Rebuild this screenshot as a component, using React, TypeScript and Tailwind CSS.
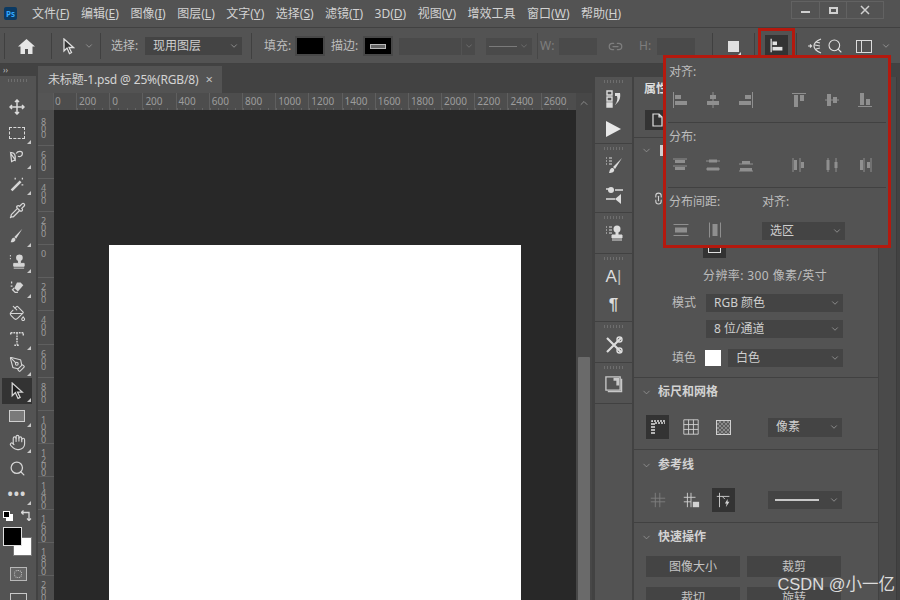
import type { ReactNode } from "react";
import { ChevronDown, ChevronUp, Hand, Link2, PaintBucket, PenTool, Pipette, Search } from "lucide-react";

const MENU = [
  ["文件", "F"],
  ["编辑", "E"],
  ["图像", "I"],
  ["图层", "L"],
  ["文字", "Y"],
  ["选择", "S"],
  ["滤镜", "T"],
  ["3D", "D"],
  ["视图", "V"],
  ["增效工具", ""],
  ["窗口", "W"],
  ["帮助", "H"],
];

const H_RULER = ["200", "0", "200", "400", "600", "800", "1000", "1200", "1400", "1600", "1800", "2000", "2200", "2400", "2600"];
const V_RULER = ["600", "400", "200", "0", "200", "400", "600", "800", "1000", "1200", "1400", "1600", "1800", "2000"];

function Ic({ children, size = 20, className = "" }: { children: ReactNode; size?: number; className?: string }) {
  return (
    <svg width={size} height={size} viewBox="0 0 20 20" fill="none" stroke="currentColor" strokeWidth="1.4" className={className}>
      {children}
    </svg>
  );
}

function Chevron({ className = "" }: { className?: string }) {
  return <ChevronDown size={10} strokeWidth={1.5} className={`shrink-0 text-[#b4b4b4] ${className}`} />;
}

function Select({ label, className }: { label: ReactNode; className: string }) {
  return (
    <div className={`flex items-center justify-between bg-[#444444] pl-2 pr-[3px] text-xs text-[#cfcfcf] ${className}`}>
      <span className="truncate">{label}</span>
      <Chevron />
    </div>
  );
}

function Sep({ className = "" }: { className?: string }) {
  return <div className={`h-[26px] w-px shrink-0 bg-[#404040] ${className}`} />;
}

function Grip({ className = "mb-2" }: { className?: string }) {
  return <div className={`mx-auto mt-[3px] h-[3px] w-[20px] shrink-0 bg-[repeating-linear-gradient(90deg,#6e6e6e_0_1px,transparent_1px_3px)] ${className}`} />;
}

// petit triangle en bas à droite des outils groupés
function Tool({ children, corner = true, active = false }: { children: ReactNode; corner?: boolean; active?: boolean }) {
  return (
    <div className={`relative mx-[2px] flex h-[25.8px] w-[30px] shrink-0 items-center justify-center text-[#d6d6d6] ${active ? "bg-[#333333]" : ""}`}>
      {children}
      {corner && <span className="absolute bottom-[2px] right-[1px] h-0 w-0 border-b-[4px] border-l-[4px] border-b-[#c8c8c8] border-l-transparent" />}
    </div>
  );
}

function SectionTitle({ title }: { title: string }) {
  return (
    <div className="flex h-[28px] items-center pl-[7px] text-xs font-bold text-[#d2d2d2]">
      <ChevronDown size={11} strokeWidth={1.4} className="mr-[6px] text-[#a8a8a8]" />
      {title}
    </div>
  );
}

function RulerLabel({ label }: { label: string }) {
  return <div className="mx-auto w-[10px] leading-[10px] tracking-[-6.500px] [text-orientation:upright] [writing-mode:vertical-rl]">{label}</div>;
}

function AlignIcon({ name }: { name: string }) {
  const bars: Record<string, ReactNode> = {
    left: (
      <>
        <path d="M3.500 2v16" strokeWidth="1" />
        <rect x="5" y="5" width="6" height="4" fill="currentColor" stroke="none" />
        <rect x="5" y="11" width="12" height="4" fill="currentColor" stroke="none" />
      </>
    ),
    hcenter: (
      <>
        <path d="M10 2v16" strokeWidth="1" />
        <rect x="7" y="5" width="6" height="4" fill="currentColor" stroke="none" />
        <rect x="4" y="11" width="12" height="4" fill="currentColor" stroke="none" />
      </>
    ),
    right: (
      <>
        <path d="M16.500 2v16" strokeWidth="1" />
        <rect x="9" y="5" width="6" height="4" fill="currentColor" stroke="none" />
        <rect x="3" y="11" width="12" height="4" fill="currentColor" stroke="none" />
      </>
    ),
    top: (
      <>
        <path d="M3 3.500h14" strokeWidth="1" />
        <rect x="5" y="5" width="4" height="12" fill="currentColor" stroke="none" />
        <rect x="11" y="5" width="4" height="6" fill="currentColor" stroke="none" />
      </>
    ),
    vcenter: (
      <>
        <path d="M3 10h14" strokeWidth="1" />
        <rect x="5" y="4" width="4" height="12" fill="currentColor" stroke="none" />
        <rect x="11" y="7" width="4" height="6" fill="currentColor" stroke="none" />
      </>
    ),
    bottom: (
      <>
        <path d="M3 16.500h14" strokeWidth="1" />
        <rect x="5" y="3" width="4" height="12" fill="currentColor" stroke="none" />
        <rect x="11" y="9" width="4" height="6" fill="currentColor" stroke="none" />
      </>
    ),
    dtop: (
      <>
        <path d="M3 4h14M3 11h14" strokeWidth="1" />
        <rect x="5" y="5" width="10" height="3" fill="currentColor" stroke="none" />
        <rect x="5" y="12" width="10" height="3" fill="currentColor" stroke="none" />
      </>
    ),
    dmid: (
      <>
        <path d="M3 6h14M3 14h14" strokeWidth="1" />
        <rect x="6" y="4.500" width="8" height="3" fill="currentColor" stroke="none" />
        <rect x="4" y="12.500" width="12" height="3" fill="currentColor" stroke="none" />
      </>
    ),
    dbot: (
      <>
        <path d="M3 9h14M3 16h14" strokeWidth="1" />
        <rect x="6" y="6" width="8" height="3" fill="currentColor" stroke="none" />
        <rect x="4" y="13" width="12" height="3" fill="currentColor" stroke="none" />
      </>
    ),
    dleft: (
      <>
        <path d="M4 3v14M11 3v14" strokeWidth="1" />
        <rect x="5" y="5" width="3" height="10" fill="currentColor" stroke="none" />
        <rect x="12" y="7" width="3" height="6" fill="currentColor" stroke="none" />
      </>
    ),
    dhmid: (
      <>
        <path d="M6 3v14M14 3v14" strokeWidth="1" />
        <rect x="4.500" y="5" width="3" height="10" fill="currentColor" stroke="none" />
        <rect x="12.500" y="7" width="3" height="6" fill="currentColor" stroke="none" />
      </>
    ),
    dright: (
      <>
        <path d="M9 3v14M16 3v14" strokeWidth="1" />
        <rect x="5" y="5" width="3" height="10" fill="currentColor" stroke="none" />
        <rect x="12" y="7" width="3" height="6" fill="currentColor" stroke="none" />
      </>
    ),
    sv: (
      <>
        <path d="M2.500 4.500h15M2.500 15.500h15" strokeWidth="1" />
        <rect x="4" y="7.500" width="12" height="5" fill="currentColor" stroke="none" />
      </>
    ),
    sh: (
      <>
        <path d="M4.500 2.500v15M15.500 2.500v15" strokeWidth="1" />
        <rect x="7.500" y="4" width="5" height="12" fill="currentColor" stroke="none" />
      </>
    ),
  };
  return (
    <div className="flex w-[34px] justify-center text-[#8f8f8f]">
      <Ic size={20}>{bars[name]}</Ic>
    </div>
  );
}

function AlignPopup() {
  return (
    <div className="absolute left-[663px] top-[55px] flex h-[193px] w-[228px] flex-col border-[3px] border-[#b4190e] bg-[#535353] px-[2px] text-xs text-[#bdbdbd]">
      <div className="flex h-[65px] flex-col border-b border-[#414141] pl-[1px]">
        <div className="mt-[5px] h-[18px] leading-[18px]">对齐:</div>
        <div className="mt-[9px] flex -translate-x-[5px]">
          {["left", "hcenter", "right"].map((n) => (
            <AlignIcon key={n} name={n} />
          ))}
          <div className="w-[20px]" />
          {["top", "vcenter", "bottom"].map((n) => (
            <AlignIcon key={n} name={n} />
          ))}
        </div>
      </div>
      <div className="flex h-[65px] flex-col border-b border-[#414141] pl-[1px]">
        <div className="mt-[5px] h-[18px] leading-[18px]">分布:</div>
        <div className="mt-[9px] flex -translate-x-[5px]">
          {["dtop", "dmid", "dbot"].map((n) => (
            <AlignIcon key={n} name={n} />
          ))}
          <div className="w-[20px]" />
          {["dleft", "dhmid", "dright"].map((n) => (
            <AlignIcon key={n} name={n} />
          ))}
        </div>
      </div>
      <div className="flex pl-[1px]">
        <div className="w-[93px]">
          <div className="mt-[5px] h-[18px] leading-[18px]">分布间距:</div>
          <div className="mt-[9px] flex -translate-x-[5px]">
            <AlignIcon name="sv" />
            <AlignIcon name="sh" />
          </div>
        </div>
        <div>
          <div className="mt-[5px] h-[18px] leading-[18px]">对齐:</div>
          <Select label="选区" className="mt-[11px] h-[18px] w-[83px]" />
        </div>
      </div>
    </div>
  );
}

function OptionsBar() {
  return (
    <div className="flex h-[36px] shrink-0 items-center border-b border-[#414141] bg-[#535353] pt-px text-xs text-[#bdbdbd]">
      <Sep className="ml-[4px]" />
      <svg width="17" height="15" viewBox="0 0 17 15" fill="#e6e6e6" className="ml-[13px]">
        <path d="M8.500 0 17 7.500h-2.500V15H10v-5H7v5H2.500V7.500H0z" />
      </svg>
      <Sep className="ml-[16px]" />
      <svg width="12" height="17" viewBox="0 0 12 17" fill="#333" stroke="#e0e0e0" strokeWidth="1.3" className="ml-[11px]">
        <path d="M1 1v12l3-3 2.500 5.500 2-1L6 9.500h4.500z" />
      </svg>
      <Chevron className="ml-[9px]" />
      <Sep className="ml-[6px]" />
      <span className="ml-[10px] w-[28px] shrink-0 whitespace-nowrap">选择:</span>
      <Select label="现用图层" className="ml-[6px] h-[18px] w-[97px]" />
      <Sep className="ml-[9px]" />
      <span className="ml-[12px] w-[28px] shrink-0 whitespace-nowrap">填充:</span>
      <div className="ml-[5px] h-[16px] w-[26px] shrink-0 bg-black outline outline-2 outline-[#484848]" />
      <span className="ml-[8px] w-[28px] shrink-0 whitespace-nowrap">描边:</span>
      <div className="ml-[6px] flex h-[16px] w-[26px] shrink-0 items-center justify-center bg-black outline outline-2 outline-[#484848]">
        <div className="h-[5px] w-[16px] border border-[#b8b8b8] bg-[#666666]" />
      </div>
      <div className="ml-[8px] h-[17px] w-[62px] shrink-0 bg-[#4a4a4a]" />
      <div className="ml-px flex h-[17px] w-[13px] shrink-0 items-center justify-center bg-[#4a4a4a]">
        <Chevron className="opacity-50" />
      </div>
      <div className="ml-[11px] flex h-[17px] w-[46px] shrink-0 items-center justify-between bg-[#4a4a4a] px-[3px]">
        <div className="h-px w-[28px] bg-[#7a7a7a]" />
        <Chevron className="opacity-50" />
      </div>
      <Sep className="ml-[5px] opacity-60" />
      <span className="ml-[2px] w-[14px] shrink-0 text-[#7e7e7e]">W:</span>
      <div className="ml-[5px] h-[17px] w-[38px] shrink-0 bg-[#4a4a4a]" />
      <Link2 size={15} className="ml-[11px] shrink-0 text-[#7e7e7e]" />
      <span className="ml-[16px] w-[13px] shrink-0 text-[#7e7e7e]">H:</span>
      <div className="ml-[5px] h-[17px] w-[38px] shrink-0 bg-[#4a4a4a]" />
      <Sep className="ml-[17px]" />
      <div className="relative ml-[15px] h-[11px] w-[11px] shrink-0 bg-[#e0e0e0]">
        <span className="absolute -bottom-[3px] -right-[2px] h-0 w-0 border-b-[3px] border-l-[3px] border-b-[#d8d8d8] border-l-transparent" />
      </div>
      <Sep className="ml-[15px]" />
      <div className="relative ml-[10px] flex h-[23px] w-[23px] shrink-0 items-center justify-center bg-[#333333] text-[#e2e2e2]">
        <Ic size={18}>
          <path d="M3.500 2v15" />
          <rect x="5" y="5" width="5" height="4" fill="currentColor" stroke="none" />
          <rect x="5" y="11" width="11" height="4" fill="currentColor" stroke="none" />
        </Ic>
        <div className="absolute -inset-x-[7px] -bottom-[5px] -top-[7px] border-[3px] border-[#b4190e]" />
      </div>
      <Sep className="ml-[8px]" />
      <svg width="18" height="18" viewBox="0 0 18 18" fill="none" stroke="#dcdcdc" strokeWidth="1.2" className="ml-[10px]">
        <path d="M1 9h3M3 7.500 4.500 9 3 10.500M14 2C9 4 7 6 7 9s2 5 7 7M9 5l4 1M8 8l5 1M9 12l4-1" />
      </svg>
      <Search size={16} strokeWidth={1.6} className="ml-[2px] shrink-0 text-[#e2e2e2]" />
      <div className="ml-[13px] flex h-[13px] w-[16px] shrink-0 border border-[#dcdcdc]">
        <div className="h-full w-[5px] border-r border-[#dcdcdc]" />
      </div>
      <Chevron className="ml-[9px]" />
    </div>
  );
}

function Toolbar() {
  return (
    <div className="flex w-[36px] shrink-0 flex-col overflow-hidden bg-[#535353]">
      <div className="flex h-[12px] shrink-0 items-center bg-[#424242] pl-[3px] text-[8px] leading-none text-[#c0c0c0]">››</div>
      <Grip />
      <div className="h-[4px] shrink-0" />
      <Tool corner={false}>
        <svg width="16" height="16" viewBox="0 0 16 16" fill="none" stroke="#dadada" strokeWidth="1.5">
          <path d="M8 1v14M1 8h14M6 3l2-2 2 2M6 13l2 2 2-2M3 6 1 8l2 2M13 6l2 2-2 2" />
        </svg>
      </Tool>
      <Tool>
        <div className="h-[12px] w-[16px] border border-dashed border-[#dadada]" />
      </Tool>
      <Tool>
        <Ic size={18}>
          <path d="M3 4c6-1 5 6 5 8L3 5l1 9 4-2M9 5c2-3 7-3 7 0s-3 4-5 3" />
        </Ic>
      </Tool>
      <Tool>
        <Ic size={18}>
          <path d="M3 16 13 6l2 2L5 18z" fill="currentColor" stroke="none" />
          <path d="M8 3v2M16 3v2M17 11h-2" />
        </Ic>
      </Tool>
      <Tool corner={false}>
        <Pipette size={17} strokeWidth={1.8} />
      </Tool>
      <Tool>
        <Ic size={18}>
          <path d="M16 2 7 11l2 2zM7 12c-3 0-3 2-4 5 3 0 6-1 5-4z" fill="currentColor" stroke="none" />
        </Ic>
      </Tool>
      <Tool>
        <Ic size={19}>
          <path d="M2 4h1M2 7h1" strokeWidth="1.500" strokeDasharray="1 1" />
          <circle cx="12" cy="6" r="3.500" fill="currentColor" stroke="none" />
          <path d="M11 8h2v4h4v3H6v-3h5zM6 17h11" fill="currentColor" stroke="currentColor" strokeWidth="1" />
        </Ic>
      </Tool>
      <Tool>
        <Ic size={18}>
          <path d="M10 5h4l3 3-6 7-4-4z" fill="currentColor" stroke="none" />
          <path d="m7 11-2 2 3 3h3M4 4v2M3 9h2" />
        </Ic>
      </Tool>
      <Tool corner={false}>
        <PaintBucket size={17} strokeWidth={1.5} />
      </Tool>
      <Tool>
        <Ic size={18}>
          <path d="M3 3h14v3M3 3v3M10 3v13M7 17h6" strokeDasharray="2 1" strokeWidth="1.6" />
        </Ic>
      </Tool>
      <Tool>
        <PenTool size={17} strokeWidth={1.5} />
      </Tool>
      <Tool active>
        <svg width="13" height="18" viewBox="0 0 12 17" fill="#1f1f1f" stroke="#d8d8d8" strokeWidth="1.200">
          <path d="M1 1v12l3-3 2.500 5.500 2-1L6 9.500h4.500z" />
        </svg>
      </Tool>
      <Tool>
        <div className="h-[12px] w-[16px] border border-[#cfcfcf] bg-[#7a7a7a]" />
      </Tool>
      <Tool>
        <Hand size={17} strokeWidth={1.6} />
      </Tool>
      <Tool corner={false}>
        <Search size={17} strokeWidth={1.8} />
      </Tool>
      <Tool>
        <span className="text-sm font-bold leading-none tracking-[1px]">•••</span>
      </Tool>
      <div className="ml-[3px] mt-[3px] flex h-[12px] shrink-0 items-center gap-[8px]">
        <div className="relative h-[10px] w-[10px]">
          <div className="absolute bottom-0 right-0 h-[7px] w-[7px] bg-white" />
          <div className="absolute left-0 top-0 h-[7px] w-[7px] border border-white bg-black" />
        </div>
        <svg width="11" height="11" viewBox="0 0 11 11" fill="none" stroke="#d8d8d8" strokeWidth="1.300">
          <path d="M0 2.500h8V10M6 8.500l2 2 2-2M2.500.5l-2 2 2 2" />
        </svg>
      </div>
      <div className="relative ml-[3px] mt-[5px] h-[29px] w-[29px] shrink-0">
        <div className="absolute bottom-0 right-0 h-[19px] w-[19px] border border-[#777] bg-white" />
        <div className="absolute left-0 top-0 h-[19px] w-[19px] border border-[#e0e0e0] bg-black" />
      </div>
      <div className="mx-auto mt-[11px] flex h-[14px] w-[17px] shrink-0 items-center justify-center border border-[#b8b8b8] bg-[#666666]">
        <div className="h-[8px] w-[8px] rounded-full border border-dotted border-[#d0d0d0]" />
      </div>
      <div className="mx-auto mt-[12px] h-[10px] w-[17px] shrink-0 border border-[#c8c8c8]" />
    </div>
  );
}

function DocumentArea() {
  return (
    <div className="ml-[2px] flex w-[554px] shrink-0 flex-col overflow-hidden">
      <div className="flex h-[29px] shrink-0 items-end bg-[#424242]">
        <div className="flex h-[27px] w-[184px] items-center bg-[#535353] pl-[10px] text-xs tracking-[-0.15px] text-[#d4d4d4]">
          未标题-1.psd @ 25%(RGB/8)
          <span className="ml-[7px] text-[13px] leading-none text-[#c0c0c0]">×</span>
        </div>
      </div>
      <div className="flex min-h-0 flex-1">
        <div className="flex w-[538px] flex-col">
          <div className="flex h-[17px] shrink-0 overflow-hidden bg-[#4d4d4d] text-[10px] leading-[16px] text-[#9c9c9c]">
            <div className="w-[16px] shrink-0 border-r border-[#5c5c5c] bg-[#555555]" />
            <div className="w-[22px] shrink-0 pl-[1px]">0</div>
            {H_RULER.map((label, i) => (
              <div
                key={i}
                className="w-[33.200px] shrink-0 border-l border-[#5f5f5f] bg-[repeating-linear-gradient(90deg,#646464_0_1px,transparent_1px_8.300px)] bg-[length:100%_2px] bg-bottom bg-no-repeat pl-[2px]"
              >
                {label}
              </div>
            ))}
          </div>
          <div className="flex min-h-0 flex-1">
            <div className="w-[16px] shrink-0 overflow-hidden bg-[#4d4d4d] text-center text-[9px] text-[#9c9c9c]">
              <div className="h-[35px] pt-[5px]">
                <RulerLabel label="800" />
              </div>
              {V_RULER.map((label, i) => (
                <div key={i} className="h-[33.100px] overflow-hidden border-t border-[#5f5f5f] pt-[2px]">
                  <RulerLabel label={label} />
                </div>
              ))}
            </div>
            <div className="min-w-0 flex-1 bg-[#282828] pl-[55px] pt-[135px]">
              <div className="h-full w-[412px] bg-white" />
            </div>
          </div>
        </div>
        <div className="flex w-[16px] shrink-0 flex-col bg-[#474747] px-[2px]">
          <ChevronUp size={12} className="mt-[4px] shrink-0 text-[#8a8a8a]" />
          <div className="mt-[248px] flex-1 rounded-t-[1px] bg-[#6a6a6a]" />
        </div>
      </div>
    </div>
  );
}

function StripGroup({ children, className }: { children: ReactNode; className: string }) {
  return (
    <div className={`flex shrink-0 flex-col items-center border-b border-[#414141] ${className}`}>
      <Grip className="" />
      {children}
    </div>
  );
}

function PanelStrip() {
  return (
    <div className="ml-[3px] flex w-[37px] shrink-0 flex-col bg-[#535353] text-[#dcdcdc]">
      <StripGroup className="h-[67px]">
        <Ic size={20} className="mt-[5px]">
          <path d="M3 3h5v4H3zM3 9h5v4H3z" />
          <path d="M3 15h5v4H3z" fill="currentColor" />
          <path d="M11 5h5c1 5-1 9-5 12 2-3 3-6 2-9l-2 0z" fill="currentColor" stroke="none" />
        </Ic>
        <svg width="15" height="16" viewBox="0 0 15 16" fill="#e8e8e8" className="mt-[13px]">
          <path d="M0 0 15 8 0 16z" />
        </svg>
      </StripGroup>
      <StripGroup className="h-[69px]">
        <Ic size={20} className="mt-[5px]">
          <path d="M18 3 9 12l2 2zM9 13c-3 0-3 2-4 5 3 0 6-1 5-4z" fill="currentColor" stroke="none" />
          <path d="M2 3h1M5 3h3M2 6h1M5 6h3M2 9h1M5 9h3" strokeWidth="1" />
        </Ic>
        <Ic size={20} className="mt-[10px]">
          <path d="M2 4h5M11 5h8M2 14h9" strokeWidth="1.400" />
          <circle cx="7" cy="5" r="3" fill="currentColor" stroke="none" />
          <path d="M17 9v10l-6-5z" fill="currentColor" stroke="none" />
        </Ic>
      </StripGroup>
      <StripGroup className="h-[41px]">
        <Ic size={20} className="mt-[4px]">
          <path d="M2 4h1M5 4h3M2 7h1M5 7h3M2 10h1M5 10h3" strokeWidth="1" />
          <circle cx="13" cy="6" r="3.500" fill="currentColor" stroke="none" />
          <path d="M12 8h2v4h4v3H8v-3h4zM8 17h10" fill="currentColor" stroke="currentColor" strokeWidth="1" />
        </Ic>
      </StripGroup>
      <StripGroup className="h-[68px]">
        <span className="mt-[8px] font-['Liberation_Sans',sans-serif] text-[17px] leading-[18px]">
          A<span className="font-light text-[#bbb]">|</span>
        </span>
        <span className="mt-[10px] font-['Liberation_Sans',sans-serif] text-[17px] font-bold leading-[18px]">¶</span>
      </StripGroup>
      <StripGroup className="h-[41px]">
        <Ic size={20} className="mt-[7px]">
          <path d="m3 3 14 14M17 3 3 17" strokeWidth="2.200" />
          <circle cx="15.500" cy="4.500" r="2.500" />
          <circle cx="15.500" cy="15.500" r="2.500" />
        </Ic>
      </StripGroup>
      <StripGroup className="h-[41px] text-[#c8c8c8]">
        <Ic size={19} className="mt-[6px]">
          <path d="M2 2h15v14H2z" />
          <path d="M4 17.500h14.500V4" />
          <path d="M10 3h6v8h-3V6h-3z" fill="currentColor" stroke="none" />
        </Ic>
      </StripGroup>
    </div>
  );
}

function IconButton({ children, active = false }: { children: ReactNode; active?: boolean }) {
  return <div className={`flex h-[24px] w-[23px] items-center justify-center text-[#d2d2d2] ${active ? "bg-[#333333]" : ""}`}>{children}</div>;
}

function PropertiesPanel() {
  return (
    <div className="ml-[2px] flex w-[244px] shrink-0 flex-col overflow-hidden bg-[#535353] text-xs text-[#bdbdbd]">
      <div className="h-[28px] shrink-0 pl-[10px] pt-[3px] font-bold leading-[18px] text-[#dcdcdc]">属性</div>
      <div className="h-[33px] shrink-0 border-b border-[#414141] pl-[11px] pt-[5px]">
        <div className="flex h-[20px] w-[24px] items-center justify-center bg-[#333333]">
          <svg width="11" height="14" viewBox="0 0 11 14" fill="none" stroke="#e0e0e0" strokeWidth="1.2">
            <path d="M1 1h6l3 3v9H1zM7 1v3h3" />
          </svg>
        </div>
      </div>
      <div className="flex h-[240px] shrink-0 flex-col border-b border-[#414141]">
        <div className="flex h-[24px] shrink-0 items-center pl-[7px] text-[#a8a8a8]">
          <ChevronDown size={11} strokeWidth={1.4} />
          <div className="ml-[8px] h-[11px] w-[5px] bg-[#cfcfcf]" />
        </div>
        <Link2 size={13} strokeWidth={2} className="ml-[18px] mt-[30px] shrink-0 -rotate-90 text-[#d0d0d0]" />
        <div className="ml-[69px] mt-[35px] flex shrink-0 gap-[2px]">
          <div className="flex h-[18px] w-[23px] items-center justify-center bg-[#333333]">
            <div className="h-[7px] w-[13px] border border-[#e0e0e0]" />
          </div>
          <div className="h-[6px] w-[16px] border border-[#e0e0e0]" />
        </div>
        <div className="ml-[69px] mt-[9px] h-[18px] shrink-0 leading-[18px] tracking-[0.4px]">分辨率: 300 像素/英寸</div>
        <div className="mt-[9px] flex shrink-0 items-center">
          <span className="ml-[38px] w-[34px]">模式</span>
          <Select label="RGB 颜色" className="h-[18px] w-[137px]" />
        </div>
        <Select label="8 位/通道" className="ml-[72px] mt-[8px] h-[18px] w-[137px] shrink-0" />
        <div className="mt-[11px] flex shrink-0 items-center">
          <span className="ml-[38px] w-[33px]">填色</span>
          <div className="h-[16px] w-[16px] bg-white" />
          <Select label="白色" className="ml-[7px] h-[18px] w-[115px]" />
        </div>
      </div>
      <div className="h-[72px] shrink-0 border-b border-[#414141]">
        <SectionTitle title="标尺和网格" />
        <div className="ml-[12px] mt-[9px] flex items-center">
          <IconButton active>
            <svg width="16" height="16" viewBox="0 0 16 16" fill="none" stroke="#e0e0e0">
              <path d="M2 15V2h13M4 15V4h11" strokeWidth="1.500" strokeDasharray="2 1" />
            </svg>
          </IconButton>
          <div className="ml-[10px]">
            <IconButton>
              <Ic size={18}>
                <path d="M2 2h16v16H2zM7.300 2v16M12.700 2v16M2 7.300h16M2 12.700h16" strokeWidth="1" />
              </Ic>
            </IconButton>
          </div>
          <div className="ml-[10px]">
            <IconButton>
              <div className="h-[15px] w-[15px] border border-[#d0d0d0] bg-[repeating-conic-gradient(#8a8a8a_0_25%,#5c5c5c_0_50%)] bg-[length:4px_4px]" />
            </IconButton>
          </div>
          <Select label="像素" className="ml-[33px] h-[19px] w-[74px]" />
        </div>
      </div>
      <div className="h-[73px] shrink-0 border-b border-[#414141]">
        <div className="pt-px">
          <SectionTitle title="参考线" />
        </div>
        <div className="ml-[12px] mt-[9px] flex items-center">
          <IconButton>
            <Ic size={18} className="text-[#808080]">
              <path d="M7 2v16M12 2v16M2 8h16M2 12h16" strokeWidth="1" />
            </Ic>
          </IconButton>
          <div className="ml-[10px]">
            <IconButton>
              <Ic size={18}>
                <path d="M6 2v16M10 2v16M2 7h13M2 12h8" strokeWidth="1" />
                <rect x="12" y="12" width="7" height="6" fill="currentColor" stroke="none" />
              </Ic>
            </IconButton>
          </div>
          <div className="ml-[10px]">
            <IconButton active>
              <Ic size={18}>
                <path d="M5 2v16M2 6h14M8 6l3 3" strokeWidth="1" />
                <path d="m14 9-3 5h2l-1 4 4-6h-2z" fill="currentColor" stroke="none" />
              </Ic>
            </IconButton>
          </div>
          <div className="ml-[33px] flex h-[18px] w-[74px] items-center justify-between bg-[#444444] pl-[7px] pr-[3px]">
            <div className="h-[2px] w-[44px] bg-[#c8c8c8]" />
            <Chevron />
          </div>
        </div>
      </div>
      <div>
        <SectionTitle title="快速操作" />
        <div className="ml-[12px] mt-[5px] grid w-[195px] grid-cols-2 gap-x-[7px] gap-y-[10px] text-center leading-[21px] text-[#c4c4c4]">
          <div className="h-[21px] bg-[#444444]">图像大小</div>
          <div className="h-[21px] bg-[#444444]">裁剪</div>
          <div className="h-[21px] bg-[#444444]">裁切</div>
          <div className="h-[21px] bg-[#444444]">旋转</div>
        </div>
      </div>
    </div>
  );
}

export default function App() {
  return (
    <div className="relative flex h-[600px] w-[900px] flex-col overflow-hidden bg-[#424242] font-['Noto_Sans','Noto_Sans_CJK_SC',sans-serif]">
      <div className="flex h-[28px] shrink-0 items-center border-b border-[#414141] bg-[#535353] text-xs text-[#d2d2d2]">
        <div className="ml-[4px] flex h-[13px] w-[13px] items-center justify-center rounded-[2px] bg-[#0b3a63] text-[8px] font-bold leading-none text-[#31a8ff]">Ps</div>
        <div className="ml-[15px] flex w-[620px] gap-[11.500px] whitespace-nowrap">
          {MENU.map(([name, key]) => (
            <span key={name}>
              {name}
              {key && (
                <>
                  (<span className="underline">{key}</span>)
                </>
              )}
            </span>
          ))}
        </div>
        <div className="mb-[7px] ml-[139px] flex h-[18px] w-[93px] items-center border border-[#626262] text-[#d0d0d0]">
          <div className="flex h-full w-[28px] items-center justify-center border-r border-[#626262]">
            <div className="mt-[3px] h-[2px] w-[9px] bg-[#d0d0d0]" />
          </div>
          <div className="flex h-full w-[27px] items-center justify-center border-r border-[#626262]">
            <div className="h-[7px] w-[9px] border-2 border-[#d0d0d0]" />
          </div>
          <svg width="10" height="10" viewBox="0 0 10 10" stroke="#d0d0d0" strokeWidth="1.500" className="ml-[13px]">
            <path d="m1 1 8 8M9 1 1 9" />
          </svg>
        </div>
      </div>
      <OptionsBar />
      <div className="flex min-h-0 flex-1">
        <Toolbar />
        <DocumentArea />
        <div className="flex min-h-0 flex-col">
          <div className="ml-[3px] flex h-[13px] shrink-0 items-center justify-center bg-[#424242] pl-[20px] text-[10px] leading-none text-[#c0c0c0]">‹‹</div>
          <div className="flex min-h-0 flex-1">
            <PanelStrip />
            <PropertiesPanel />
            <div className="ml-px w-[17px] shrink-0 bg-[#4a4a4a]" />
            <div className="w-px shrink-0 bg-[#3c3c3c]" />
          </div>
        </div>
      </div>
      <AlignPopup />
      <div className="absolute bottom-[6px] right-[5px] font-['Liberation_Sans','Noto_Sans_CJK_SC',sans-serif] text-[16.500px] leading-5 text-[#dcdcdc]">CSDN @小一亿</div>
    </div>
  );
}
